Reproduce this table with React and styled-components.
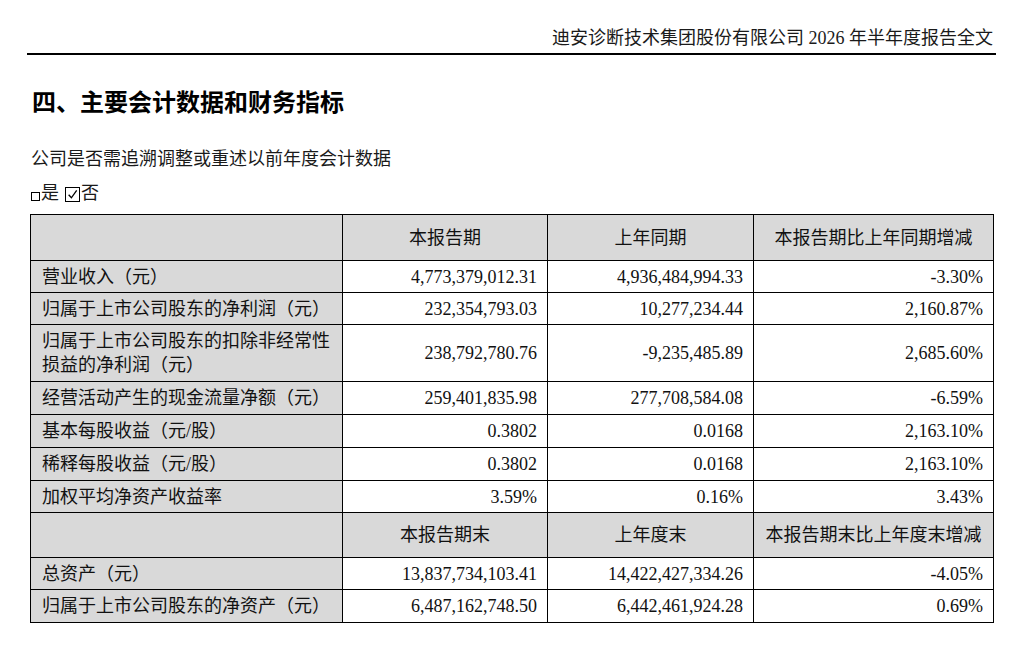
import styled, { createGlobalStyle } from 'styled-components';

const GlobalStyle = createGlobalStyle`
  html, body {
    margin: 0;
    padding: 0;
    background: #fff;
  }
  body {
    font-family: "Liberation Serif", "Noto Sans CJK SC", serif;
    color: #000;
  }
`;

const Page = styled.div`
  width: 969px;
  padding-left: 27px;
`;

const RunningHead = styled.div`
  height: 55px;
  display: flex;
  align-items: flex-end;
  justify-content: flex-end;
  padding: 0 3px 3px 0;
  box-sizing: border-box;
  border-bottom: 2px solid #000;
  font-size: 18px;
  line-height: 24px;
  color: #1a1a1a;
`;

const SectionTitle = styled.h2`
  margin: 30px 0 0 5px;
  font-family: "Noto Sans CJK SC", sans-serif;
  font-size: 24px;
  line-height: 32px;
  font-weight: 700;
`;

const Question = styled.p`
  margin: ${(p) => p.$top}px 0 0 4px;
  font-size: 18px;
  line-height: 26px;
  color: #1a1a1a;
  display: flex;
  align-items: center;
`;

const SmallBox = styled.span`
  display: inline-block;
  width: 7px;
  height: 7px;
  border: 1px solid #000;
  margin: 7px 1px 0 0;
`;

const CheckBox = styled.span`
  display: inline-flex;
  width: 15px;
  height: 15px;
  border: 1px solid #000;
  margin: 2px 1px 0 6px;
  box-sizing: border-box;
  align-items: center;
  justify-content: center;
`;

const Table = styled.table`
  margin: 8px 0 0 3px;
  border-collapse: collapse;
  table-layout: fixed;
  width: 963px;
  font-size: 18px;
  line-height: 24px;
  color: #111;
`;

const Row = styled.tr`
  height: ${(p) => p.$h}px;
`;

const Cell = styled.td`
  border: 1px solid #000;
  padding: 0 10px;
  box-sizing: border-box;
  white-space: nowrap;
  text-align: ${(p) => (p.$head ? 'center' : 'right')};
  background: ${(p) => (p.$head ? '#d9d9d9' : '#fff')};
`;

const Label = styled.td`
  border: 1px solid #000;
  padding: 0 10px 0 11px;
  background: #d9d9d9;
  text-align: left;
  white-space: nowrap;
`;

const rows = [
  ['营业收入（元）', '4,773,379,012.31', '4,936,484,994.33', '-3.30%', 32],
  ['归属于上市公司股东的净利润（元）', '232,354,793.03', '10,277,234.44', '2,160.87%', 32],
  [['归属于上市公司股东的扣除非经常性', '损益的净利润（元）'], '238,792,780.76', '-9,235,485.89', '2,685.60%', 57],
  ['经营活动产生的现金流量净额（元）', '259,401,835.98', '277,708,584.08', '-6.59%', 33],
  ['基本每股收益（元/股）', '0.3802', '0.0168', '2,163.10%', 33],
  ['稀释每股收益（元/股）', '0.3802', '0.0168', '2,163.10%', 33],
  ['加权平均净资产收益率', '3.59%', '0.16%', '3.43%', 32],
];

const balance = [
  ['总资产（元）', '13,837,734,103.41', '14,422,427,334.26', '-4.05%', 32],
  ['归属于上市公司股东的净资产（元）', '6,487,162,748.50', '6,442,461,924.28', '0.69%', 33],
];

function DataRow({ label, a, b, c, h }) {
  return (
    <Row $h={h}>
      <Label>
        {Array.isArray(label) ? (
          <>
            {label[0]}
            <br />
            {label[1]}
          </>
        ) : (
          label
        )}
      </Label>
      <Cell>{a}</Cell>
      <Cell>{b}</Cell>
      <Cell>{c}</Cell>
    </Row>
  );
}

function HeadRow({ cols, h }) {
  return (
    <Row $h={h}>
      <Label />
      {cols.map((c) => (
        <Cell $head key={c}>
          {c}
        </Cell>
      ))}
    </Row>
  );
}

export default function App() {
  return (
    <>
      <GlobalStyle />
      <Page>
        <RunningHead>迪安诊断技术集团股份有限公司 2026 年半年度报告全文</RunningHead>
        <SectionTitle>四、主要会计数据和财务指标</SectionTitle>
        <Question $top={29}>公司是否需追溯调整或重述以前年度会计数据</Question>
        <Question $top={8}>
          <SmallBox />是
          <CheckBox>
            <svg width="11" height="11" viewBox="0 0 10 10">
              <path d="M1.5 5.2 L4 8 L8.8 1.2" fill="none" stroke="#000" strokeWidth="1.2" />
            </svg>
          </CheckBox>
          否
        </Question>
        <Table>
          <colgroup>
            <col style={{ width: 312 }} />
            <col style={{ width: 205 }} />
            <col style={{ width: 206 }} />
            <col style={{ width: 240 }} />
          </colgroup>
          <tbody>
            <HeadRow h={46} cols={['本报告期', '上年同期', '本报告期比上年同期增减']} />
            {rows.map(([label, a, b, c, h], i) => (
              <DataRow key={i} label={label} a={a} b={b} c={c} h={h} />
            ))}
            <HeadRow h={45} cols={['本报告期末', '上年度末', '本报告期末比上年度末增减']} />
            {balance.map(([label, a, b, c, h], i) => (
              <DataRow key={i} label={label} a={a} b={b} c={c} h={h} />
            ))}
          </tbody>
        </Table>
      </Page>
    </>
  );
}
